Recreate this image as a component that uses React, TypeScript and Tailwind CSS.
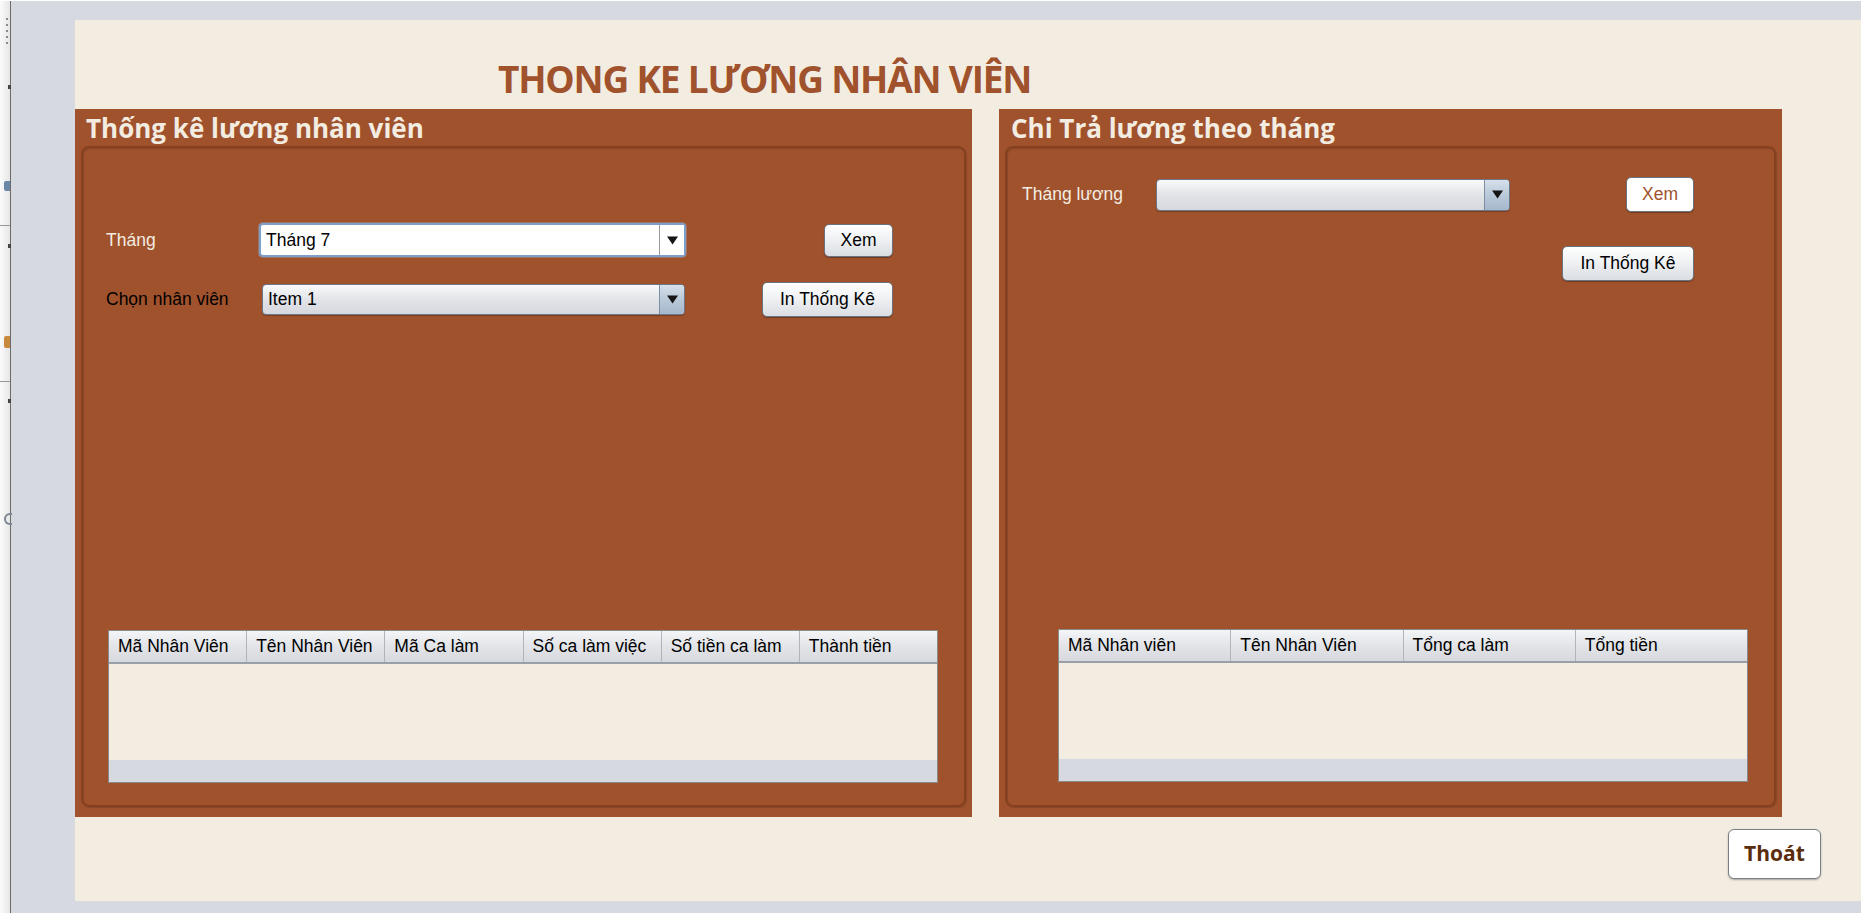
import React from "react";

const body = "font-['Liberation_Sans',Arial,sans-serif] text-[17.5px]";

function Arrow() {
  return (
    <svg width="11" height="9" viewBox="0 0 11 9">
      <path d="M0 0.5h11L5.5 8.5z" fill="#151515" />
    </svg>
  );
}

function Combo({ value, focused, className }: { value?: string; focused?: boolean; className: string }) {
  if (focused) {
    return (
      <div className={`flex rounded-[4px] border-2 border-[#7d9fca] bg-white shadow-[0_0_0_1px_rgba(150,180,215,0.35)] ${className}`}>
        <div className={`flex flex-1 items-center pl-[5px] text-black ${body}`}>{value}</div>
        <div className="flex w-[25px] items-center justify-center border-l border-[#9a9a9a] bg-white">
          <Arrow />
        </div>
      </div>
    );
  }
  return (
    <div className={`flex overflow-hidden rounded-[4px] border border-[#6e7787] bg-gradient-to-b from-[#f9fafb] via-[#e2e4e8] to-[#d5d8de] shadow-[0_1px_1px_rgba(0,0,0,0.25)] ${className}`}>
      <div className={`flex flex-1 items-center pl-[5px] text-black ${body}`}>{value}</div>
      <div className="flex w-[25px] items-center justify-center border-l border-[#7d8ea2] bg-gradient-to-b from-[#d6e0ea] via-[#b9c9d9] to-[#a5b8cb]">
        <Arrow />
      </div>
    </div>
  );
}

function Btn({ children, className, light }: { children: React.ReactNode; className: string; light?: boolean }) {
  return (
    <div
      className={`flex items-center justify-center rounded-[5px] border border-[#6b737e] shadow-[0_1px_1px_rgba(0,0,0,0.3)] ${body} ${
        light ? "bg-white text-[#a0522d]" : "bg-gradient-to-b from-white via-[#eef0f2] to-[#dadde2] text-black"
      } ${className}`}
    >
      {children}
    </div>
  );
}

function Table({ cols, className }: { cols: string[]; className: string }) {
  return (
    <div className={`flex flex-col border border-[#8a8a8a] bg-[#f3ece1] ${className}`}>
      <div className="flex h-[33px] border-b-2 border-[#9aa0a8] bg-gradient-to-b from-[#f4f5f7] via-[#e2e4e8] to-[#d7d9de]">
        {cols.map((c, i) => (
          <div
            key={c}
            className={`flex flex-1 items-center pl-[9px] text-black whitespace-nowrap ${body} ${
              i < cols.length - 1 ? "border-r border-[#b1b5bb]" : ""
            }`}
          >
            {c}
          </div>
        ))}
      </div>
      <div className="flex-1" />
      <div className="h-[22px] bg-[#d6d9e0]" />
    </div>
  );
}

function Panel({ title, children, className, titlePad }: { title: string; children: React.ReactNode; className: string; titlePad: string }) {
  return (
    <div className={`flex flex-col bg-[#a0522d] px-[6px] pb-[10px] ${className}`}>
      <div className={`h-[37px] pt-[6px] font-['Open_Sans',sans-serif] text-[26px] font-bold leading-none text-[#f3ece1] ${titlePad}`}>
        {title}
      </div>
      <div className="flex-1 rounded-[8px] border-2 border-[#85411f] shadow-[inset_1px_1px_1px_rgba(0,0,0,0.15),1px_1px_1px_rgba(0,0,0,0.15)]">
        {children}
      </div>
    </div>
  );
}

export default function App() {
  return (
    <div className="flex h-[913px] w-[1861px] overflow-hidden border-t border-white bg-[#d6d9e0]">
      {/* IDE side strip */}
      <div className="relative h-full w-[11px] border-r border-[#6b6b6b] bg-gradient-to-r from-[#fbfbfb] to-[#e6e6e6]">
        <div className="absolute left-[6px] top-[17px] flex flex-col gap-[4px]">
          {[0, 1, 2, 3, 4].map((i) => (
            <div key={i} className="h-[2px] w-[2px] bg-[#8a8a8a]" />
          ))}
        </div>
        <div className="absolute left-[8px] top-[84px] h-[4px] w-[3px] bg-[#444]" />
        <div className="absolute left-[4px] top-[180px] h-[10px] w-[6px] rounded-l-[2px] bg-[#6b87a6]" />
        <div className="absolute left-[0px] top-[224px] h-[1px] w-[10px] bg-[#999]" />
        <div className="absolute left-[8px] top-[243px] h-[4px] w-[3px] bg-[#444]" />
        <div className="absolute left-[4px] top-[335px] h-[12px] w-[6px] rounded-l-[2px] bg-[#c98a3e]" />
        <div className="absolute left-[0px] top-[380px] h-[1px] w-[10px] bg-[#999]" />
        <div className="absolute left-[8px] top-[398px] h-[4px] w-[3px] bg-[#444]" />
        <div className="absolute left-[4px] top-[512px] h-[12px] w-[8px] rounded-l-full border-2 border-r-0 border-[#7d8592]" />
      </div>

      <div className="flex flex-1 flex-col pl-[64px] pt-[19px] pb-[12px]">
        <div className="flex flex-1 flex-col bg-[#f3ece1]">
          <div className="h-[89px] pl-[423px] pt-[40px]">
            <div className="font-['Open_Sans',sans-serif] text-[37px] font-bold leading-none tracking-[-1.2px] text-[#a0522d] whitespace-nowrap">
              THONG KE LƯƠNG NHÂN VIÊN
            </div>
          </div>

          <div className="flex h-[708px] gap-[27px]">
            <Panel title="Thống kê lương nhân viên" className="w-[897px]" titlePad="pl-[5px]">
              <div className="flex flex-col pl-[23px] pt-[75px]">
                <div className="flex h-[34px] items-center">
                  <div className={`w-[153px] text-[#f3ece1] ${body}`}>Tháng</div>
                  <Combo value="Tháng 7" focused className="h-[34px] w-[427px]" />
                  <Btn className="ml-[138px] h-[33px] w-[69px]">Xem</Btn>
                </div>
                <div className="mt-[25px] flex h-[35px] items-center">
                  <div className={`w-[156px] text-black ${body}`}>Chọn nhân viên</div>
                  <Combo value="Item 1" className="h-[31px] w-[423px]" />
                  <Btn className="ml-[77px] h-[35px] w-[131px]">In Thống Kê</Btn>
                </div>
                <Table
                  className="ml-[2px] mt-[313px] h-[153px] w-[830px]"
                  cols={["Mã Nhân Viên", "Tên Nhân Viên", "Mã Ca làm", "Số ca làm việc", "Số tiền ca làm", "Thành tiền"]}
                />
              </div>
            </Panel>

            <Panel title="Chi Trả lương theo tháng" className="w-[783px]" titlePad="pl-[6px]">
              <div className="flex flex-col pl-[15px] pt-[29px]">
                <div className="flex h-[35px] items-center">
                  <div className={`w-[134px] text-[#f3ece1] ${body}`}>Tháng lương</div>
                  <Combo className="h-[32px] w-[354px]" />
                  <Btn light className="ml-[116px] h-[35px] w-[68px]">Xem</Btn>
                </div>
                <Btn className="ml-[540px] mt-[34px] h-[35px] w-[132px]">In Thống Kê</Btn>
                <Table
                  className="ml-[36px] mt-[348px] h-[153px] w-[690px]"
                  cols={["Mã Nhân viên", "Tên Nhân Viên", "Tổng ca làm", "Tổng tiền"]}
                />
              </div>
            </Panel>
          </div>

          <div className="flex justify-end pr-[40px] pt-[12px]">
            <div className="flex h-[50px] w-[93px] items-center justify-center rounded-[6px] border border-[#7a7f86] bg-white font-['Open_Sans',sans-serif] text-[21px] font-bold text-[#5a2d0c] shadow-[0_1px_2px_rgba(0,0,0,0.3)]">
              Thoát
            </div>
          </div>
        </div>
      </div>
    </div>
  );
}
